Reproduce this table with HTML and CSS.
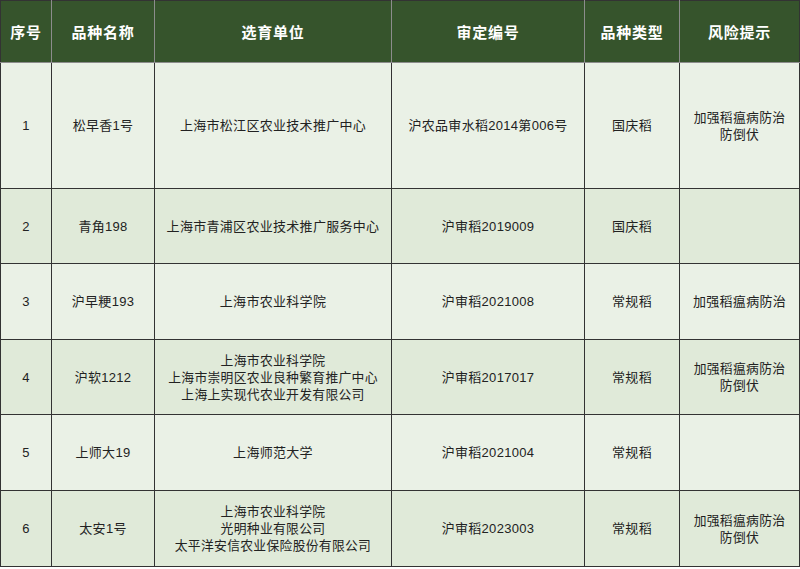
FILE: index.html
```html
<!DOCTYPE html>
<html lang="zh">
<head>
<meta charset="utf-8">
<link rel="stylesheet" href="styles.css">
</head>
<body>
<table class="grid">
  <colgroup>
    <col class="c1"><col class="c2"><col class="c3"><col class="c4"><col class="c5"><col class="c6">
  </colgroup>
  <thead>
    <tr class="head">
      <th>序号</th><th>品种名称</th><th>选育单位</th><th>审定编号</th><th>品种类型</th><th>风险提示</th>
    </tr>
  </thead>
  <tbody>
    <tr class="r1 odd">
      <td>1</td><td>松早香1号</td><td>上海市松江区农业技术推广中心</td><td>沪农品审水稻2014第006号</td><td>国庆稻</td><td><div class="ln">加强稻瘟病防治</div><div class="ln">防倒伏</div></td>
    </tr>
    <tr class="r2 even">
      <td>2</td><td>青角198</td><td>上海市青浦区农业技术推广服务中心</td><td>沪审稻2019009</td><td>国庆稻</td><td></td>
    </tr>
    <tr class="r3 odd">
      <td>3</td><td>沪早粳193</td><td>上海市农业科学院</td><td>沪审稻2021008</td><td>常规稻</td><td>加强稻瘟病防治</td>
    </tr>
    <tr class="r4 even">
      <td>4</td><td>沪软1212</td><td><div class="ln">上海市农业科学院</div><div class="ln">上海市崇明区农业良种繁育推广中心</div><div class="ln">上海上实现代农业开发有限公司</div></td><td>沪审稻2017017</td><td>常规稻</td><td><div class="ln">加强稻瘟病防治</div><div class="ln">防倒伏</div></td>
    </tr>
    <tr class="r5 odd">
      <td>5</td><td>上师大19</td><td>上海师范大学</td><td>沪审稻2021004</td><td>常规稻</td><td></td>
    </tr>
    <tr class="r6 even">
      <td>6</td><td>太安1号</td><td><div class="ln">上海市农业科学院</div><div class="ln">光明种业有限公司</div><div class="ln">太平洋安信农业保险股份有限公司</div></td><td>沪审稻2023003</td><td>常规稻</td><td><div class="ln">加强稻瘟病防治</div><div class="ln">防倒伏</div></td>
    </tr>
  </tbody>
</table>
</body>
</html>
```

FILE: styles.css
```css
html, body {
  margin: 0;
  padding: 0;
  background: #ffffff;
}
.grid {
  border-collapse: collapse;
  table-layout: fixed;
  width: 799px;
  font-family: "Liberation Sans", "Noto Sans CJK SC", sans-serif;
  border: 1.5px solid #333333;
}
.c1 { width: 51px; }
.c2 { width: 103px; }
.c3 { width: 237px; }
.c4 { width: 193px; }
.c5 { width: 95px; }
.c6 { width: 120px; }
.head {
  height: 62px;
  background: #36542c;
}
.head th {
  color: #ffffff;
  font-size: 15px;
  font-weight: bold;
  letter-spacing: 0.8px;
  text-align: center;
  vertical-align: middle;
  padding: 0;
  border-left: 1.5px solid #8c8c8c;
  border-bottom: 1.5px solid #8c8c8c;
}
.head th:first-child { border-left: none; }
td {
  border: 1.5px solid #333333;
  text-align: center;
  vertical-align: middle;
  padding: 0;
  font-size: 13px;
  line-height: 17px;
  letter-spacing: 0.3px;
  color: #222222;
}
.ln {
  font-size: 12.8px;
  height: 17px;
  line-height: 17px;
}
.odd { background: #eaf1e6; }
.even { background: #e0ead9; }
.r1 { height: 126px; }
.r2 { height: 75px; }
.r3 { height: 76px; }
.r4 { height: 75px; }
.r5 { height: 76px; }
.r6 { height: 76px; }
```
